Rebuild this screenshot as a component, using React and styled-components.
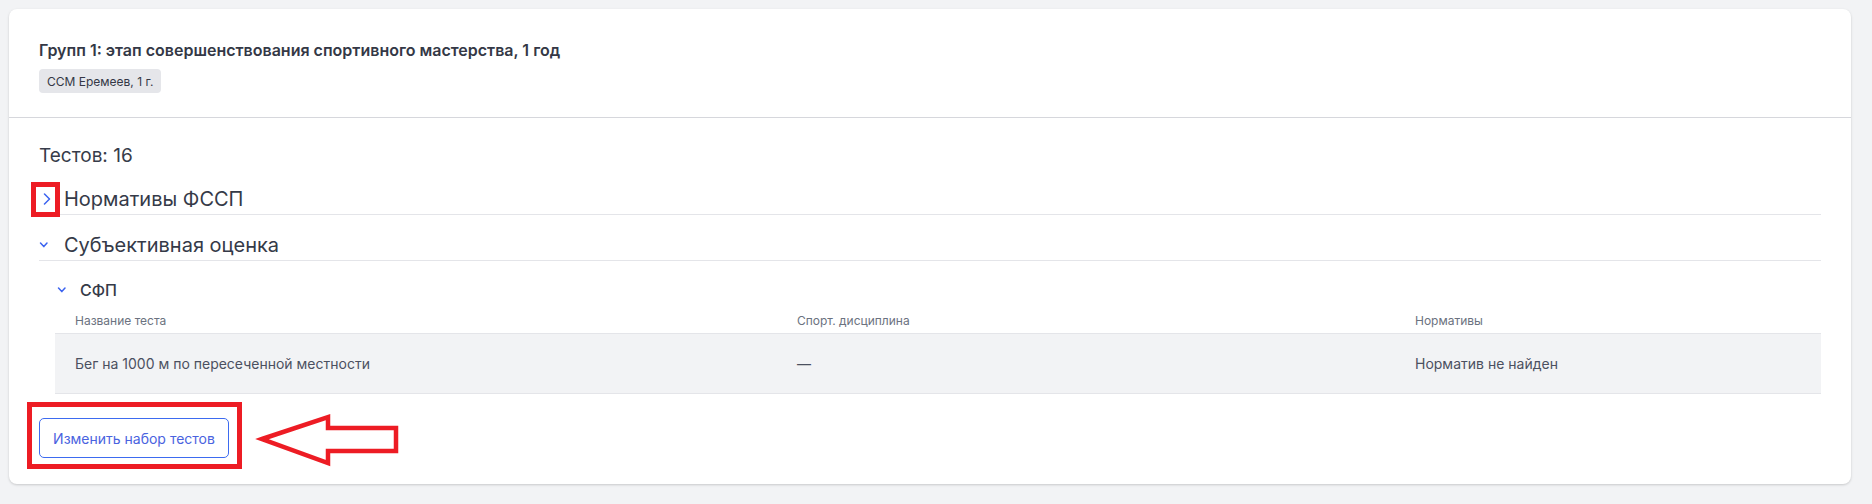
import React, { useState } from 'react';
import styled, { createGlobalStyle } from 'styled-components';

const GlobalStyle = createGlobalStyle`
    html, body {
        margin: 0;
        padding: 0;
        background: #f2f3f5;
        font-family: Inter, "Noto Sans", sans-serif;
        color: #353a48;
    }
`;

const Page = styled.div`
    width: 1872px;
    height: 504px;
    box-sizing: border-box;
    padding: 9px 21px 20px 9px;
    background: #f2f3f5;
`;

const Card = styled.div`
    position: relative;
    height: 475px;
    box-sizing: border-box;
    background: #fff;
    border-radius: 8px;
    box-shadow: 0 1px 3px rgba(0, 0, 0, 0.13), 0 1px 2px rgba(0, 0, 0, 0.05);
`;

const Header = styled.div`
    padding: 31px 30px 24px 30px;
    border-bottom: 1px solid #d6d7dc;
    display: flex;
    flex-direction: column;
    align-items: flex-start;
    gap: 9px;
`;

const Title = styled.div`
    font-size: 16px;
    line-height: 20px;
    font-weight: 600;
    color: #343846;
`;

const Badge = styled.span`
    display: inline-flex;
    align-items: center;
    height: 24px;
    padding: 0 8px;
    border-radius: 4px;
    background: #e5e6ea;
    font-size: 12px;
    color: #343846;
`;

const Body = styled.div`
    padding: 26px 30px 27px 30px;
`;

const Count = styled.div`
    font-size: 19px;
    line-height: 24px;
    color: #373c4a;
    margin-bottom: 16px;
`;

const SectionHead = styled.div`
    display: flex;
    align-items: center;
    height: 30px;
    margin-top: ${({ first }) => (first ? '0' : '15px')};
    border-bottom: 1px solid #e4e5e9;
    font-size: 20px;
    color: #353a48;
    cursor: pointer;
`;

const SubSection = styled.div`
    margin-left: 16px;
    margin-top: 14px;
`;

const SubHead = styled.div`
    display: flex;
    align-items: center;
    height: 30px;
    font-size: 16px;
    font-weight: 500;
    color: #353a48;
`;

const IconSlot = styled.span`
    display: inline-flex;
    align-items: center;
    width: 25px;
    flex-shrink: 0;
`;

const Table = styled.div`
    display: grid;
    grid-template-columns: 722fr 618fr 426fr;
`;

const HeadCell = styled.div`
    padding: 8px 20px 4px 20px;
    font-size: 12px;
    line-height: 16px;
    color: #6b7280;
    border-bottom: 1px solid #e4e5e9;
`;

const Cell = styled.div`
    display: flex;
    align-items: center;
    height: 59px;
    padding: 0 20px;
    background: #f2f3f5;
    border-bottom: 1px solid #e4e5e9;
    font-size: 14px;
    color: #4b5060;
`;

const Button = styled.button`
    margin-top: 24px;
    width: 190px;
    height: 40px;
    background: #fff;
    border: 1px solid #3d6bf0;
    border-radius: 5px;
    font-family: Inter, sans-serif;
    font-size: 14px;
    color: #4a63e0;
    cursor: pointer;
`;

const Mark = styled.div`
    position: absolute;
    left: ${({ x }) => x}px;
    top: ${({ y }) => y}px;
    width: ${({ w }) => w}px;
    height: ${({ h }) => h}px;
    box-sizing: border-box;
    border: 5px solid #ed1c24;
    pointer-events: none;
`;

const Arrow = styled.svg`
    position: absolute;
    left: 241px;
    top: 401px;
    pointer-events: none;
`;

const Chevron = ({ open, sub }) =>
    open ? (
        <svg width="12" height="8" viewBox="0 0 12 8" style={{ marginLeft: sub ? 2 : 0 }}>
            <polyline points="1.5,2 4.8,5.6 8,2" fill="none" stroke="#3b63f0" strokeWidth="1.5" strokeLinecap="round" strokeLinejoin="round" />
        </svg>
    ) : (
        <svg width="14" height="12" viewBox="0 0 14 12">
            <polyline points="5.5,1 10.5,6 5.5,11" fill="none" stroke="#3b63f0" strokeWidth="1.5" strokeLinecap="round" strokeLinejoin="round" />
        </svg>
    );

const rows = [
    { name: 'Бег на 1000 м по пересеченной местности', discipline: '—', norm: 'Норматив не найден' },
];

export default function App() {
    const [fsspOpen, setFsspOpen] = useState(false);

    return (
        <Page>
            <GlobalStyle />
            <Card>
                <Header>
                    <Title>Групп 1: этап совершенствования спортивного мастерства, 1 год</Title>
                    <Badge>ССМ Еремеев, 1 г.</Badge>
                </Header>
                <Body>
                    <Count>Тестов: 16</Count>
                    <SectionHead first onClick={() => setFsspOpen(!fsspOpen)}>
                        <IconSlot><Chevron open={fsspOpen} /></IconSlot>
                        Нормативы ФССП
                    </SectionHead>
                    <SectionHead>
                        <IconSlot><Chevron open /></IconSlot>
                        Субъективная оценка
                    </SectionHead>
                    <SubSection>
                        <SubHead>
                            <IconSlot><Chevron open sub /></IconSlot>
                            СФП
                        </SubHead>
                        <Table>
                            <HeadCell>Название теста</HeadCell>
                            <HeadCell>Спорт. дисциплина</HeadCell>
                            <HeadCell>Нормативы</HeadCell>
                            {rows.map((r) => (
                                <React.Fragment key={r.name}>
                                    <Cell>{r.name}</Cell>
                                    <Cell>{r.discipline}</Cell>
                                    <Cell>{r.norm}</Cell>
                                </React.Fragment>
                            ))}
                        </Table>
                    </SubSection>
                    <Button>Изменить набор тестов</Button>
                </Body>

                <Mark x={22} y={173} w={29} h={35} />
                <Mark x={18} y={393} w={215} h={67} />
                <Arrow width="160" height="60" viewBox="0 0 160 60">
                    <polygon
                        points="12,29 78,7 78,18 146,18 146,41 78,41 78,53"
                        fill="none"
                        stroke="#ed1c24"
                        strokeWidth="4.5"
                        strokeLinejoin="miter"
                    />
                </Arrow>
            </Card>
        </Page>
    );
}
